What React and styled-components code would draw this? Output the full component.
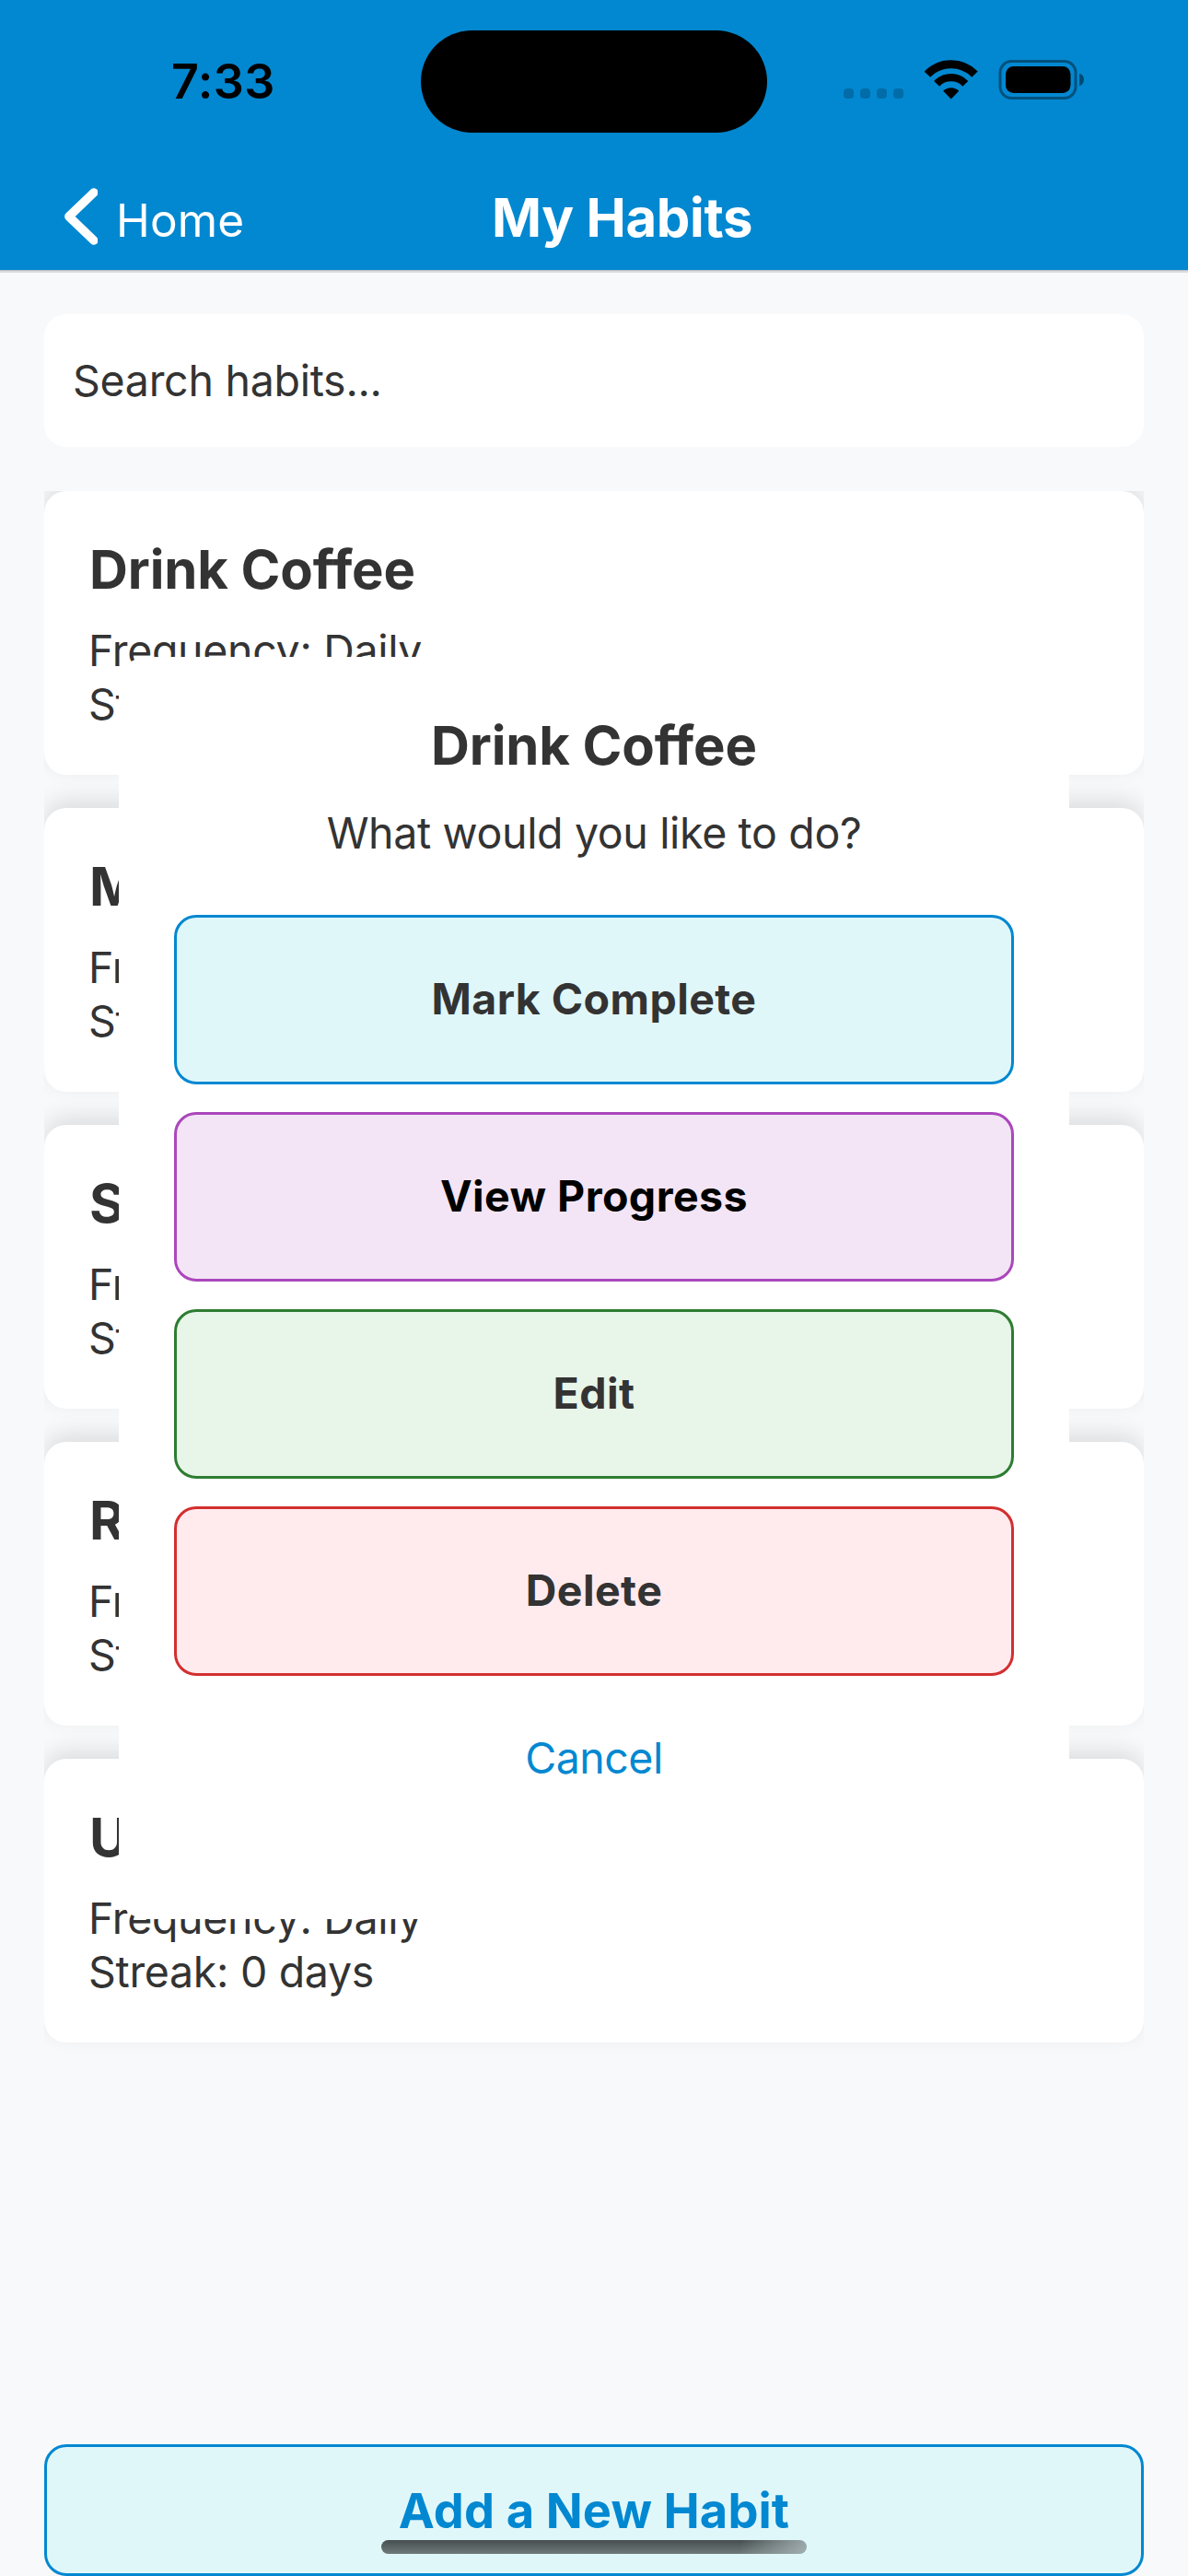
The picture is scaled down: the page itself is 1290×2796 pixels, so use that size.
import React from "react";
import styled, { createGlobalStyle } from "styled-components";

const GlobalStyle = createGlobalStyle`
  *, *::before, *::after { box-sizing: border-box; }
  body {
    margin: 0;
    background: #f8f9fb;
    font-family: Inter, "Liberation Sans", sans-serif;
    font-variant-ligatures: none;
    color: #333333;
  }
  h1, h2, p { margin: 0; }
  button { font-family: inherit; padding: 0; cursor: pointer; }
`;

const Screen = styled.div`
  position: relative;
  display: flex;
  flex-direction: column;
  width: 1290px;
  height: 2796px;
  overflow: hidden;
  background: #f8f9fb;
`;

const Header = styled.header`
  flex: none;
  height: 293px;
  background: #0288d1;
  box-shadow: 0 1px 0 #bcbec0, 0 3px 0 #dadbdd;
`;

const StatusBar = styled.div`
  display: grid;
  grid-template-columns: 457px 376px 1fr;
  align-items: center;
  height: 177px;
  color: #000000;
`;

const Clock = styled.span`
  padding-left: 186px;
  font-size: 52px;
  font-weight: 600;
  line-height: 64px;
  letter-spacing: 0.5px;
`;

const Island = styled.div`
  height: 111px;
  border-radius: 56px;
  background: #000000;
`;

const Indicators = styled.div`
  display: flex;
  align-items: flex-start;
  height: 43px;
  margin-top: -4px;
  padding-left: 83px;
`;

const SignalDots = styled.div`
  display: flex;
  gap: 7px;
  margin-top: 31px;
`;

const SignalDot = styled.span`
  width: 11px;
  height: 11px;
  border-radius: 4px;
  background: rgba(0, 0, 0, 0.2);
`;

const WifiIcon = styled.svg`
  width: 58px;
  height: 43px;
  margin-left: 23px;
`;

const BatteryIcon = styled.svg`
  width: 94px;
  height: 43px;
  margin-left: 22px;
`;

const NavBar = styled.nav`
  display: grid;
  grid-template-columns: 534px 1fr;
  align-items: center;
  height: 116px;
  color: #ffffff;
`;

const BackButton = styled.button`
  display: flex;
  align-items: center;
  gap: 20px;
  padding-left: 68px;
  border: 0;
  background: none;
  color: inherit;
`;

const Chevron = styled.svg`
  width: 38px;
  height: 62px;
`;

const BackLabel = styled.span`
  margin-top: 8px;
  font-size: 49.5px;
  line-height: 60px;
  letter-spacing: 0.15px;
`;

const NavTitle = styled.h1`
  margin-top: 1px;
  font-size: 58px;
  font-weight: 700;
  line-height: 72px;
  letter-spacing: -0.3px;
`;

const Content = styled.main`
  display: flex;
  flex: 1;
  flex-direction: column;
  min-height: 0;
  padding: 48px 48px 0;
`;

const SearchField = styled.input`
  flex: none;
  width: 100%;
  height: 144px;
  margin-bottom: 48px;
  padding: 0 31px;
  border: 0;
  border-radius: 24px;
  outline: 0;
  background: #ffffff;
  font-family: inherit;
  font-size: 46.5px;
  letter-spacing: -0.28px;

  &::placeholder {
    color: #333333;
    opacity: 1;
  }
`;

const HabitList = styled.div`
  display: flex;
  flex: 1;
  flex-direction: column;
  gap: 36px;
  min-height: 0;
  overflow: hidden;
`;

const HabitCard = styled.article`
  flex: none;
  height: 308px;
  padding: 49px 48px 0;
  border-radius: 24px;
  background: #ffffff;
  box-shadow: 0 -9px 24px rgba(0, 0, 0, 0.11);
`;

const HabitName = styled.h2`
  margin: 0 0 23px 1px;
  font-size: 58px;
  font-weight: 700;
  line-height: 72px;
  letter-spacing: -0.1px;
`;

const HabitDetail = styled.p`
  font-size: 46.5px;
  line-height: 58px;
  letter-spacing: -0.32px;
`;

const AddButton = styled.button`
  flex: none;
  height: 143px;
  border: 3px solid #0288d1;
  border-radius: 24px;
  background: #e0f7fa;
  color: #0288d1;
  font-size: 52.4px;
  font-weight: 700;
  letter-spacing: 0.12px;
`;

const HomeIndicator = styled.div`
  position: absolute;
  bottom: 24px;
  left: 414px;
  width: 462px;
  height: 15px;
  border-radius: 8px;
  background:
    linear-gradient(100deg, rgba(170, 184, 186, 0) 84%, rgba(170, 184, 186, 0.85) 100%),
    linear-gradient(#464e4f, #707a7a);
`;

const Overlay = styled.div`
  position: absolute;
  inset: 0;
  display: flex;
  align-items: center;
  justify-content: center;
`;

const Sheet = styled.section`
  display: flex;
  flex-direction: column;
  width: 1032px;
  height: 1370px;
  padding: 60px 60px 0;
  border-radius: 30px;
  background: #ffffff;
  text-align: center;
`;

const SheetTitle = styled.h2`
  margin-bottom: 30px;
  font-size: 58px;
  font-weight: 700;
  line-height: 72px;
  letter-spacing: -0.1px;
`;

const SheetPrompt = styled.p`
  margin-bottom: 60px;
  font-size: 46.5px;
  line-height: 58px;
  letter-spacing: -0.35px;
`;

const Actions = styled.div`
  display: flex;
  flex-direction: column;
  gap: 30px;
`;

const ActionButton = styled.button`
  height: 184px;
  padding-bottom: 2px;
  border: 3px solid ${(p) => p.$border};
  border-radius: 24px;
  background: ${(p) => p.$fill};
  color: ${(p) => p.$color || "#333333"};
  font-size: 46.5px;
  font-weight: 700;
  letter-spacing: 0.45px;
`;

const CancelButton = styled.button`
  align-self: center;
  margin-top: 60px;
  border: 0;
  background: none;
  color: #0288d1;
  font-size: 46.5px;
  line-height: 58px;
  letter-spacing: -0.5px;
`;

const habits = ["Drink Coffee", "Meditate", "Stretch", "Read", "Update Journal"];

const actions = [
  { label: "Mark Complete", fill: "#e0f7fa", border: "#0288d1" },
  { label: "View Progress", fill: "#f3e5f5", border: "#ab47bc", color: "#000000" },
  { label: "Edit", fill: "#e8f5e9", border: "#2e7d32" },
  { label: "Delete", fill: "#ffebee", border: "#d32f2f" },
];

function StatusIndicators() {
  return (
    <Indicators>
      <SignalDots>
        {[0, 1, 2, 3].map((n) => (
          <SignalDot key={n} />
        ))}
      </SignalDots>
      <WifiIcon viewBox="0 0 58 43" fill="none">
        <path d="M2.9 15.7A36 36 0 0 1 54.5 15.7" stroke="#000" strokeWidth="9" />
        <path d="M13.1 25.8A21.6 21.6 0 0 1 44.3 25.8" stroke="#000" strokeWidth="8.2" />
        <path d="M20.2 33.8A12 12 0 0 1 37.2 33.8L28.7 42.4Z" fill="#000" />
      </WifiIcon>
      <BatteryIcon viewBox="0 0 94 43">
        <rect x="2" y="1.5" width="82" height="40" rx="12.5" fill="none" stroke="#000" strokeOpacity="0.4" strokeWidth="3" />
        <rect x="8" y="7" width="70.5" height="29" rx="8.5" />
        <path d="M88 14.5C91.3 15.8 93 18.5 93 21.5S91.3 27.2 88 28.5Z" fillOpacity="0.45" />
      </BatteryIcon>
    </Indicators>
  );
}

export default function App() {
  return (
    <>
      <GlobalStyle />
      <Screen>
        <Header>
          <StatusBar>
            <Clock>7:33</Clock>
            <Island />
            <StatusIndicators />
          </StatusBar>
          <NavBar>
            <BackButton>
              <Chevron viewBox="0 0 38 62" fill="none" stroke="#fff" strokeWidth="9.4" strokeLinecap="round" strokeLinejoin="round">
                <path d="M34 4.9L6.8 31L34 57.1" />
              </Chevron>
              <BackLabel>Home</BackLabel>
            </BackButton>
            <NavTitle>My Habits</NavTitle>
          </NavBar>
        </Header>
        <Content>
          <SearchField placeholder="Search habits..." />
          <HabitList>
            {habits.map((name) => (
              <HabitCard key={name}>
                <HabitName>{name}</HabitName>
                <HabitDetail>Frequency: Daily</HabitDetail>
                <HabitDetail>Streak: 0 days</HabitDetail>
              </HabitCard>
            ))}
          </HabitList>
          <AddButton>Add a New Habit</AddButton>
        </Content>
        <Overlay>
          <Sheet>
            <SheetTitle>Drink Coffee</SheetTitle>
            <SheetPrompt>What would you like to do?</SheetPrompt>
            <Actions>
              {actions.map((a) => (
                <ActionButton key={a.label} $fill={a.fill} $border={a.border} $color={a.color}>
                  {a.label}
                </ActionButton>
              ))}
            </Actions>
            <CancelButton>Cancel</CancelButton>
          </Sheet>
        </Overlay>
        <HomeIndicator />
      </Screen>
    </>
  );
}
